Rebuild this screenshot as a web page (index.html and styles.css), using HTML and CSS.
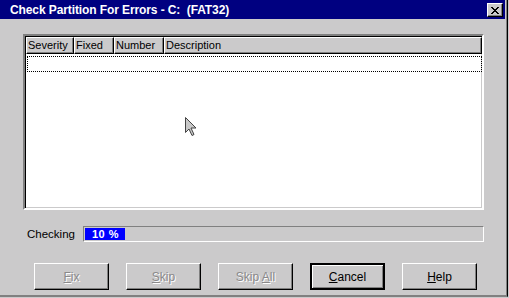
FILE: index.html
```html
<!DOCTYPE html>
<html>
<head>
  <title>Check Partition For Errors</title>
  <link rel="stylesheet" href="styles.css">
</head>
<body>
  <div class="window">
    <div class="titlebar">
      <span class="title">Check Partition For Errors - C:&nbsp; (FAT32)</span>
      <button class="close-btn" aria-label="Close">
        <svg width="8" height="7" viewBox="0 0 8 7"><path d="M0 0h2v1h1v1h2V1h1V0h2v1H7v1H6v1H5v1h1v1h1v1h1v1H6V6H5V5H3v1H2v1H0V6h1V5h1V4h1V3H2V2H1V1H0z" fill="#000"/></svg>
      </button>
    </div>

    <div class="content">
      <div class="listbox">
        <div class="list-header">
          <div class="col col-severity">Severity</div>
          <div class="col col-fixed">Fixed</div>
          <div class="col col-number">Number</div>
          <div class="col col-desc">Description</div>
        </div>
        <div class="list-body">
          <div class="focus-row"></div>
        </div>
      </div>

      <div class="progress-row">
        <span class="progress-label">Checking</span>
        <div class="progress">
          <div class="progress-fill" style="width: 40px;">10 %</div>
        </div>
      </div>

      <div class="buttons">
        <button class="btn" disabled><u>F</u>ix</button>
        <button class="btn" disabled><u>S</u>kip</button>
        <button class="btn" disabled>Skip <u>A</u>ll</button>
        <button class="btn btn-default"><u>C</u>ancel</button>
        <button class="btn"><u>H</u>elp</button>
      </div>
    </div>

    <svg class="cursor" width="12" height="20" viewBox="0 0 12 20">
      <path d="M0.5 0.5v15l3.5-3.5 3 6.5 2-1-3-6.5h5z" fill="#c8c8c8" stroke="#444" stroke-width="1"/>
    </svg>
  </div>
</body>
</html>
```

FILE: styles.css
```css
* {
  margin: 0;
  padding: 0;
  box-sizing: border-box;
}

body {
  background: #cbcacb;
  font-family: 'Liberation Sans', Arial, sans-serif;
  font-size: 11px;
  color: #000;
  width: 509px;
  height: 298px;
  overflow: hidden;
}

.window {
  position: relative;
  width: 508px;
  height: 297px;
  background: #cbcacb;
  border-right: 1px solid #000;
  border-bottom: 1px solid #808080;
  box-shadow: inset -1px -1px 0 #808080;
}

.titlebar {
  height: 19px;
  width: 505px;
  background: #000080;
  color: #fff;
  display: flex;
  align-items: center;
  justify-content: space-between;
  padding: 0 2px 0 10px;
}

.title {
  font-weight: bold;
  font-size: 12px;
  letter-spacing: -0.1px;
}

.close-btn {
  width: 16px;
  height: 14px;
  margin-top: 1px;
  background: #cbcacb;
  border: 1px solid;
  border-color: #fff #000 #000 #fff;
  box-shadow: inset -1px -1px 0 #808080;
  display: flex;
  align-items: center;
  justify-content: center;
}

.content {
  padding: 15px 0 0 23px;
}

.listbox {
  width: 461px;
  height: 176px;
  background: #fff;
  border: 2px solid;
  border-color: #808080 #fff #fff #808080;
  box-shadow: inset 1px 1px 0 #000, inset -1px -1px 0 #cbcacb;
  padding: 1px 0 0 1px;
}

.list-header {
  display: flex;
  height: 17px;
}

.col {
  background: #cbcacb;
  border: 1px solid;
  border-color: #fff #000 #000 #fff;
  box-shadow: inset -1px -1px 0 #808080;
  padding: 1px 0 0 1px;
  line-height: 13px;
  white-space: nowrap;
}

.col-severity { width: 48px; }
.col-fixed { width: 40px; }
.col-number { width: 50px; }
.col-desc { flex: 1; }

.list-body {
  padding: 2px 1px 0 1px;
}

.focus-row {
  height: 16px;
  width: 455px;
  border: 1px dotted #000;
}

.progress-row {
  display: flex;
  align-items: center;
  margin-top: 16px;
  height: 16px;
}

.progress-label {
  width: 60px;
  padding-left: 4px;
  font-size: 11.5px;
}

.progress {
  width: 401px;
  height: 16px;
  border: 1px solid;
  border-color: #808080 #fff #fff #808080;
  padding: 1px;
  display: flex;
}

.progress-fill {
  background: #0000ff;
  color: #fff;
  font-weight: bold;
  font-size: 11px;
  line-height: 12px;
  padding-left: 7px;
  letter-spacing: 0.5px;
  white-space: nowrap;
}

.buttons {
  display: flex;
  gap: 17px;
  margin-top: 21px;
  padding-left: 11px;
}

.btn {
  width: 75px;
  height: 27px;
  background: #cbcacb;
  border: 1px solid;
  border-color: #fff #000 #000 #fff;
  box-shadow: inset -1px -1px 0 #808080;
  font-family: 'Liberation Sans', Arial, sans-serif;
  font-size: 12px;
  color: #000;
}

.btn:disabled {
  color: #8a898a;
  text-shadow: 1px 1px 0 #fff;
}

.btn-default {
  border: 2px solid #000;
  box-shadow: inset 1px 1px 0 #fff, inset -1px -1px 0 #808080;
}

.cursor {
  position: absolute;
  left: 185px;
  top: 117px;
}
```
